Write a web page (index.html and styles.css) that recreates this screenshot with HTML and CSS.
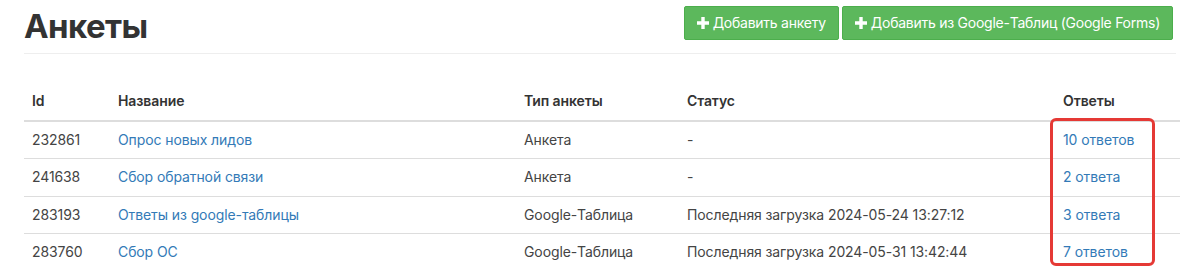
FILE: index.html
```html
<!DOCTYPE html>
<html lang="ru">
<head>
<meta charset="utf-8">
<title>Анкеты</title>
<link rel="stylesheet" href="styles.css">
</head>
<body>
<div class="page">
  <div class="page-header">
    <h1 class="title">Анкеты</h1>
    <div class="actions">
      <a class="btn" href="#"><svg class="plus" viewBox="0 0 12 12" aria-hidden="true"><path d="M4.3 0h3.4v4.3H12v3.4H7.7V12H4.3V7.7H0V4.3h4.3z"/></svg>Добавить анкету</a>
      <a class="btn" href="#"><svg class="plus" viewBox="0 0 12 12" aria-hidden="true"><path d="M4.3 0h3.4v4.3H12v3.4H7.7V12H4.3V7.7H0V4.3h4.3z"/></svg>Добавить из Google-Таблиц (Google Forms)</a>
    </div>
  </div>
  <div class="table-wrap">
    <table class="table">
      <colgroup>
        <col class="c-id"><col class="c-name"><col class="c-type"><col class="c-status"><col class="c-ans">
      </colgroup>
      <thead>
        <tr><th>Id</th><th>Название</th><th>Тип анкеты</th><th>Статус</th><th>Ответы</th></tr>
      </thead>
      <tbody>
        <tr><td>232861</td><td><a href="#">Опрос новых лидов</a></td><td>Анкета</td><td>-</td><td><a href="#">10 ответов</a></td></tr>
        <tr><td>241638</td><td><a href="#">Сбор обратной связи</a></td><td>Анкета</td><td>-</td><td><a href="#">2 ответа</a></td></tr>
        <tr><td>283193</td><td><a href="#">Ответы из google-таблицы</a></td><td>Google-Таблица</td><td>Последняя загрузка 2024-05-24 13:27:12</td><td><a href="#">3 ответа</a></td></tr>
        <tr><td>283760</td><td><a href="#">Сбор ОС</a></td><td>Google-Таблица</td><td>Последняя загрузка 2024-05-31 13:42:44</td><td><a href="#">7 ответов</a></td></tr>
      </tbody>
    </table>
    <div class="highlight"></div>
  </div>
</div>
</body>
</html>
```
FILE: styles.css
```css
* { box-sizing: border-box; }
html, body { margin: 0; background: #fff; }
body {
  font-family: Inter, "Noto Sans", "Liberation Sans", sans-serif;
  font-size: 14px;
  line-height: 20px;
  color: #333;
}
.page { padding: 0 20px 0 24px; }
.page-header {
  display: flex;
  justify-content: space-between;
  align-items: flex-start;
  padding-top: 6px;
  padding-bottom: 7px;
  margin-right: 4px;
  border-bottom: 1px solid #eee;
}
.title {
  margin: 0;
  font-size: 33px;
  line-height: 40px;
  font-weight: 700;
  color: #333;
  letter-spacing: -0.6px;
}
.actions { display: flex; gap: 3px; margin-right: 3px; }
.btn {
  display: inline-flex;
  align-items: center;
  height: 34px;
  padding: 6px 12px;
  background: #5cb85c;
  border: 1px solid #4cae4c;
  border-radius: 2px;
  color: #fff;
  text-decoration: none;
  font-size: 14px;
  white-space: nowrap;
  letter-spacing: -0.25px;
}
.plus { width: 12px; height: 12px; fill: #fff; margin-right: 4px; }
.table-wrap { position: relative; margin-top: 29px; }
.table { width: 100%; border-collapse: collapse; table-layout: fixed; }
.c-id { width: 86px; }
.c-name { width: 406px; }
.c-type { width: 163px; }
.c-status { width: 376px; }
.table th, .table td {
  text-align: left;
  padding: 8px;
  line-height: 20.5px;
  white-space: nowrap;
  letter-spacing: -0.1px;
}
.table th { font-weight: 600; color: #333; border-bottom: 2px solid #ddd; }
.table td { border-top: 1px solid #ddd; color: #444; }
.table tbody tr:first-child td { border-top: 0; }
.table a { color: #337ab7; text-decoration: none; }
.highlight {
  position: absolute;
  left: 1026px;
  top: 35px;
  width: 105px;
  height: 148px;
  border: 3px solid #e53935;
  border-radius: 6px;
  pointer-events: none;
}
```
